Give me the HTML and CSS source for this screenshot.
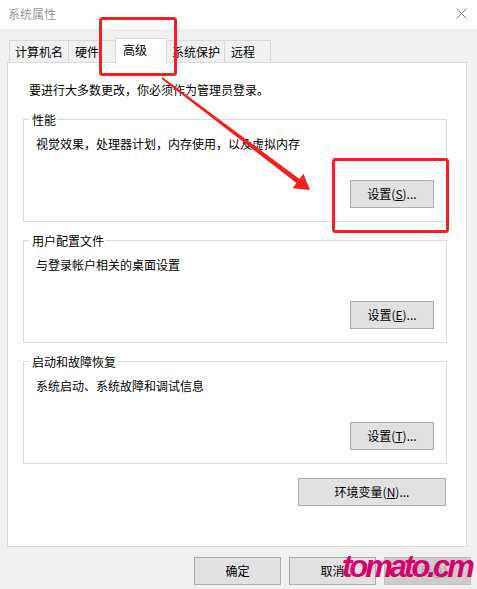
FILE: index.html
```html
<!DOCTYPE html>
<html lang="zh-CN">
<head>
<meta charset="utf-8">
<title>系统属性</title>
<link rel="stylesheet" href="styles.css">
</head>
<body>
<div class="window">
  <div class="titlebar">
    <span class="title">系统属性</span>
    <svg class="close" width="11" height="11" viewBox="0 0 11 11"><path d="M0.5 0.5 L10.5 10.5 M10.5 0.5 L0.5 10.5" stroke="#7a7a7a" stroke-width="1" fill="none"/></svg>
  </div>
  <div class="tabs">
    <div class="tab t1">计算机名</div>
    <div class="tab t2">硬件</div>
    <div class="tab t3 active">高级</div>
    <div class="tab t4">系统保护</div>
    <div class="tab t5">远程</div>
  </div>
  <div class="panel">
    <p class="intro">要进行大多数更改，你必须作为管理员登录。</p>
    <fieldset class="group g1">
      <legend>性能</legend>
      <p class="desc">视觉效果，处理器计划，内存使用，以及虚拟内存</p>
      <div class="row"><button class="btn">设置(<u>S</u>)...</button></div>
    </fieldset>
    <fieldset class="group">
      <legend>用户配置文件</legend>
      <p class="desc">与登录帐户相关的桌面设置</p>
      <div class="row"><button class="btn">设置(<u>E</u>)...</button></div>
    </fieldset>
    <fieldset class="group">
      <legend>启动和故障恢复</legend>
      <p class="desc">系统启动、系统故障和调试信息</p>
      <div class="row"><button class="btn">设置(<u>T</u>)...</button></div>
    </fieldset>
    <div class="row env-row"><button class="btn env">环境变量(<u>N</u>)...</button></div>
  </div>
  <div class="footer">
    <button class="btn foot">确定</button>
    <button class="btn foot">取消</button>
    <button class="btn foot disabled">应用(<u>A</u>)</button>
  </div>
</div>
<svg class="annot" width="477" height="589" viewBox="0 0 477 589">
  <rect x="100.5" y="18.5" width="75" height="56" rx="2" fill="none" stroke="#f42020" stroke-width="3"/>
  <rect x="333.5" y="159.5" width="114" height="72" rx="2" fill="none" stroke="#f42020" stroke-width="3"/>
  <polygon points="162.6,77.2 299.5,179 303.4,173.8 310,190 292.6,188.2 296.5,183 161.4,78.8" fill="#f42020"/>
</svg>
<div class="watermark">tomato.cm</div>
</body>
</html>
```
FILE: styles.css
```css
html, body {
  margin: 0;
  padding: 0;
}
body {
  width: 477px;
  height: 589px;
  background: #f0f0f0;
  font-family: "Noto Sans CJK SC", "Noto Sans", sans-serif;
  font-size: 12px;
  color: #000;
  position: relative;
  overflow: hidden;
}
.window {
  display: flex;
  flex-direction: column;
}
.titlebar {
  height: 29px;
  background: #fff;
  display: flex;
  align-items: center;
  justify-content: space-between;
  padding: 0 10px 0 8px;
}
.title {
  color: #999;
  line-height: 16px;
  margin-top: -2px;
}
.close {
  display: block;
  margin-top: -3px;
}
.tabs {
  display: flex;
  align-items: flex-end;
  height: 24px;
  margin-top: 9px;
  padding-left: 9px;
}
.tab {
  box-sizing: border-box;
  height: 22px;
  border: 1px solid #d9d9d9;
  border-bottom: none;
  background: #f0f0f0;
  line-height: 21px;
  padding-left: 5px;
  margin-left: -1px;
  white-space: nowrap;
}
.t1 { width: 60px; margin-left: 0; }
.t2 { width: 48px; padding-left: 6px; }
.t3 { width: 52px; padding-left: 7px; }
.t4 { width: 59px; }
.t5 { width: 47px; padding-left: 6px; }
.tab.active {
  height: 25px;
  margin-bottom: -1px;
  background: #fff;
  line-height: 22px;
  position: relative;
  z-index: 1;
}
.panel {
  box-sizing: border-box;
  height: 485px;
  margin: 0 10px 0 7px;
  border: 1px solid #d9d9d9;
  background: #fff;
  padding: 19px 19px 0 15px;
}
.intro {
  margin: 0 0 14px 6px;
  line-height: 16px;
}
.group {
  margin: 0 0 11px 0;
  padding: 9px 12px 13px 0;
  border: 1px solid #dcdcdc;
  min-width: 0;
}
.group legend {
  margin-left: 5px;
  padding: 0 1px 0 3px;
  line-height: 15px;
  height: 15px;
}
.desc {
  margin: 0 0 28px 12px;
  line-height: 16px;
}
.row {
  display: flex;
  justify-content: flex-end;
}
.btn {
  box-sizing: border-box;
  width: 84px;
  height: 28px;
  margin: 0;
  padding: 0;
  background: #e1e1e1;
  border: 1px solid #adadad;
  border-radius: 0;
  font-family: inherit;
  font-size: 12px;
  color: #000;
  line-height: 16px;
}
.env-row {
  margin-top: 14px;
}
.env {
  width: 148px;
  margin-right: 1px;
}
.footer {
  display: flex;
  justify-content: flex-end;
  gap: 8px;
  padding-right: 6px;
  margin-top: 10px;
}
.foot {
  width: 87px;
}
.foot.disabled {
  background: #cccccc;
  border-color: #bfbfbf;
  color: #a0a0a0;
}
.annot {
  position: absolute;
  left: 0;
  top: 0;
  pointer-events: none;
}
.watermark {
  position: absolute;
  left: 342px;
  top: 551px;
  font-family: "Liberation Sans", Arial, sans-serif;
  font-weight: bold;
  font-style: italic;
  font-size: 31px;
  line-height: 31px;
  letter-spacing: -3px;
  color: #d8006d;
  white-space: nowrap;
}
```
